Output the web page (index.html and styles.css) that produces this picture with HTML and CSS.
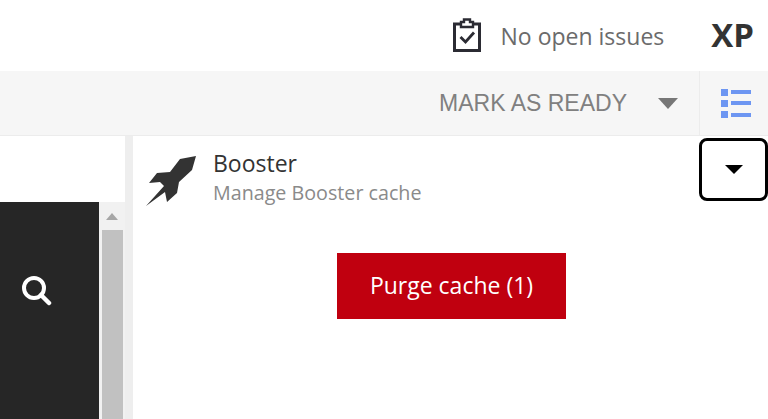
FILE: index.html
```html
<!DOCTYPE html>
<html lang="en">
<head>
<meta charset="utf-8">
<title>Booster</title>
<link rel="stylesheet" href="styles.css">
</head>
<body>
<header class="topbar">
  <svg class="clip-icon" width="30" height="36" viewBox="0 0 30 36">
    <path d="M9 7H2.500V33.500H27.500V7H21" fill="none" stroke="#2b2b33" stroke-width="3"/>
    <path d="M9 10V5H12V2.500H18V5H21V10Z" fill="none" stroke="#2b2b33" stroke-width="2.400"/>
    <path d="M8.500 20L13.500 25L22 15.500" fill="none" stroke="#2b2b33" stroke-width="2.800"/>
  </svg>
  <span class="issues">No open issues</span>
  <span class="initials">XP</span>
</header>
<div class="toolbar">
  <div class="ready">
    <span class="ready-label">MARK AS READY</span>
    <span class="ready-caret"></span>
  </div>
  <div class="list-toggle">
    <svg width="30" height="30" viewBox="0 0 30 30" fill="#6d96f2">
      <rect x="0" y="1" width="7" height="7"/><rect x="10" y="2" width="20" height="4"/>
      <rect x="0" y="12" width="7" height="7"/><rect x="10" y="13" width="20" height="4"/>
      <rect x="0" y="23" width="7" height="7"/><rect x="10" y="25" width="20" height="4"/>
    </svg>
  </div>
</div>
<main class="main">
  <section class="left">
    <div class="left-top"></div>
    <div class="left-body">
      <div class="dark">
        <svg class="search" width="32" height="34" viewBox="0 0 32 34">
          <circle cx="14" cy="15" r="10" fill="none" stroke="#fff" stroke-width="4"/>
          <path d="M21 22L29 30" stroke="#fff" stroke-width="4.500" stroke-linecap="round"/>
        </svg>
      </div>
      <div class="scroll">
        <span class="scroll-arrow"></span>
        <div class="scroll-thumb"></div>
      </div>
    </div>
  </section>
  <div class="gutter"></div>
  <section class="right">
    <div class="head">
      <svg class="rocket" width="52" height="52" viewBox="0 0 52 52">
        <path d="M50 2L34 5L24 18L11 19L3 29L14 28L18 32L0 52L19 38L21 48L31 39L33 28L46 16Z" fill="#333"/>
      </svg>
      <div class="titles">
        <div class="title">Booster</div>
        <div class="subtitle">Manage Booster cache</div>
      </div>
      <button class="menu-btn" type="button"><span class="menu-caret"></span></button>
    </div>
    <div class="actions">
      <button class="purge" type="button">Purge cache (1)</button>
    </div>
  </section>
</main>
</body>
</html>
```
FILE: styles.css
```css
* { box-sizing: border-box; }
html, body { margin: 0; height: 100%; overflow: hidden; background: #fff; }
body { display: flex; flex-direction: column; font-family: "Open Sans", sans-serif; }

.topbar { height: 71px; display: flex; align-items: center; justify-content: flex-end; padding: 0 14px 0 0; flex: none; }
.clip-icon { margin-right: 19px; margin-top: -2px; }
.issues { font-size: 23px; color: #6b6b6b; margin-right: 47px; }
.initials { font-size: 33px; font-weight: 700; color: #333; line-height: 1; margin-top: -3px; }

.toolbar { height: 65px; flex: none; display: flex; justify-content: flex-end; background: #f6f6f6; border-bottom: 1px solid #ececec; }
.ready { display: flex; align-items: center; padding-right: 21px; }
.ready-label { font-family: "Liberation Sans", sans-serif; font-size: 23px; color: #808080; margin-right: 31px; }
.ready-caret { width: 0; height: 0; border-left: 10px solid transparent; border-right: 10px solid transparent; border-top: 11px solid #777; }
.list-toggle { width: 69px; border-left: 1px solid #ececec; display: flex; align-items: center; justify-content: center; padding-left: 3px; }

.main { flex: 1; display: flex; min-height: 0; }
.left { width: 125px; flex: none; display: flex; flex-direction: column; }
.left-top { height: 66px; flex: none; }
.left-body { flex: 1; display: flex; min-height: 0; }
.dark { width: 99px; background: #262626; padding: 71px 0 0 20px; }
.search { display: block; }
.scroll { flex: 1; background: #f1f1f1; display: flex; flex-direction: column; align-items: center; padding-top: 11px; }
.scroll-arrow { width: 0; height: 0; border-left: 6px solid transparent; border-right: 6px solid transparent; border-bottom: 7px solid #a6a6a6; }
.scroll-thumb { width: 21px; flex: 1; margin-top: 10px; background: #c1c1c1; }
.gutter { width: 8px; flex: none; background: #eeeeee; }

.right { flex: 1; display: flex; flex-direction: column; }
.head { display: flex; align-items: flex-start; height: 117px; padding-left: 13px; }
.rocket { margin-top: 18px; margin-right: 15px; flex: none; }
.titles { flex: 1; padding-top: 12px; }
.title { font-size: 23px; line-height: 30px; color: #333; }
.subtitle { font-size: 19.700px; line-height: 29px; color: #8a8a8a; }
.menu-btn { width: 69px; height: 63px; margin-top: 2px; border: 3px solid #000; border-radius: 8px; background: #fff; display: flex; align-items: center; justify-content: center; padding: 0; flex: none; }
.menu-caret { width: 0; height: 0; border-left: 9px solid transparent; border-right: 9px solid transparent; border-top: 9px solid #000; }
.actions { display: flex; justify-content: center; padding-left: 2px; }
.purge { width: 229px; height: 66px; border: 0; background: #c0000f; color: #fff; font: 23px "Open Sans", sans-serif; padding: 0 0 2px; }
```
